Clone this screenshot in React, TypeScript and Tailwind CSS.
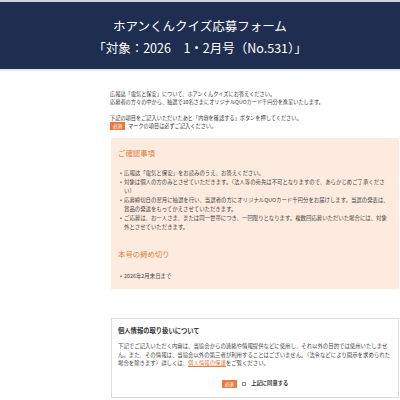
const jp = { fontFamily: '"Noto Sans CJK JP", "Noto Sans", sans-serif' };

function Required() {
  return (
    <span className="inline-flex h-[8px] w-[15px] items-center justify-center bg-[#e77b3f] text-[4.5px] leading-none text-white">
      必須
    </span>
  );
}

const notes = [
  "広報誌「電気と保安」をお読みのうえ、お答えください。",
  "対象は個人の方のみとさせていただきます。（法人等の宛先は不可となりますので、あらかじめご了承ください）",
  "応募締切日の翌月に抽選を行い、当選者の方にオリジナルQUOカード千円分をお届けします。当選の発表は、賞品の発送をもってかえさせていただきます。",
  "ご応募は、お一人さま、または同一世帯につき、一回限りとなります。複数回応募いただいた場合には、対象外とさせていただきます。",
];

function Bullet({ text }: { text: string }) {
  return (
    <li className="flex">
      <span className="w-[6px] shrink-0 text-center">•</span>
      <span className="w-[266px]">{text}</span>
    </li>
  );
}

export default function App() {
  return (
    <div style={jp} className="h-[400px] w-[400px] overflow-hidden bg-white text-[#333]">
      <header className="border-t-2 border-b-2 border-t-[#cfd4db] border-b-[#e2eaf2] bg-[#1f2d50] pt-[13px] pb-[10px] text-center text-[12.5px] leading-[22px] text-white">
        <p>ホアンくんクイズ応募フォーム</p>
        <p>「対象：2026　1・2月号（No.531）」</p>
      </header>

      <main className="ml-[110px] w-[289px]">
        <div className="mt-[19px] text-[5.2px] leading-[8px]">
          <p>広報誌「電気と保安」について、ホアンくんクイズにお答えください。</p>
          <p>応募者の方々の中から、抽選で10名さまにオリジナルQUOカード千円分を進呈いたします。</p>
          <p className="mt-[8px]">下記の項目をご記入いただいたあと「内容を確認する」ボタンを押してください。</p>
          <p className="flex h-[8px] items-center gap-[3px]">
            <Required />
            <span>マークの項目は必ずご記入ください。</span>
          </p>
        </div>

        <section className="ml-[1px] mt-[8px] bg-[#fdebdf] px-[7px] pt-[10px] pb-[8.5px] text-[5.4px] leading-[9px] text-[#444]">
          <h2 className="text-[7.4px] leading-[10px] text-[#e2803b]">ご確認事項</h2>
          <ul className="mt-[10.5px]">
            {notes.map((n) => (
              <Bullet key={n} text={n} />
            ))}
          </ul>
          <h2 className="mt-[17.5px] text-[7.4px] leading-[10px] text-[#e2803b]">本号の締め切り</h2>
          <ul className="mt-[12.5px]">
            <Bullet text="2026年2月末日まで" />
          </ul>
        </section>

        <section className="ml-[1px] mt-[29px] border border-[#dcdcdc] px-[6px] pt-[7px] pb-[8px]">
          <h3 className="text-[6.3px] font-bold leading-[10px] text-[#333]">個人情報の取り扱いについて</h3>
          <p className="mt-[6px] w-[272px] text-[5.4px] leading-[8.5px] text-[#444]">
            下記でご記入いただく内容は、当協会からの連絡や情報提供などに使用し、それ以外の目的では使用いたしません。また、その情報は、当協会以外の第三者が利用することはございません。（法令などにより開示を求められた場合を除きます）詳しくは、
            <span className="text-[#e2803b] underline">個人情報の保護</span>
            をご覧ください。
          </p>
          <div className="mt-[12px] flex h-[9px] items-center justify-center gap-[5px]">
            <Required />
            <span className="inline-block h-[4.5px] w-[4.5px] border border-[#888] bg-white" />
            <span className="text-[5.3px] font-bold text-[#333]">上記に同意する</span>
          </div>
        </section>
      </main>
    </div>
  );
}
